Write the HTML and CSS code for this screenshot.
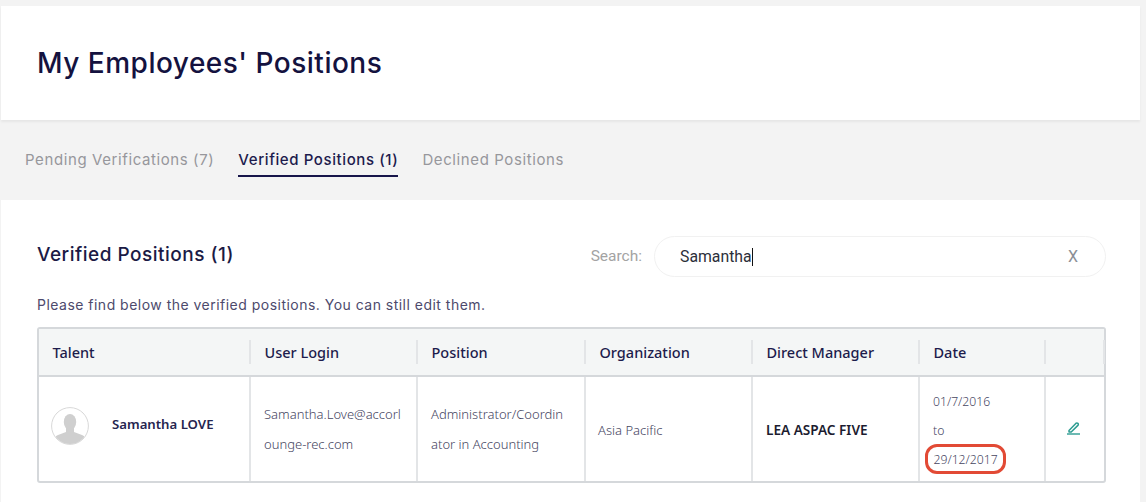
FILE: index.html
```html
<!DOCTYPE html>
<html lang="en">
<head>
<meta charset="utf-8">
<title>My Employees' Positions</title>
<link rel="stylesheet" href="styles.css">
</head>
<body>
<div class="page">
  <header class="title-card"><h1>My Employees' Positions</h1></header>
  <nav class="tabs">
    <a class="tab">Pending Verifications (7)</a>
    <a class="tab tab-active">Verified Positions (1)</a>
    <a class="tab">Declined Positions</a>
  </nav>
  <main class="content">
    <div class="section-head">
      <h2>Verified Positions (1)</h2>
      <div class="search">
        <span class="search-label">Search:</span>
        <div class="search-box"><span class="search-value">Samantha</span><span class="caret"></span><span class="search-clear">X</span></div>
      </div>
    </div>
    <p class="hint">Please find below the verified positions. You can still edit them.</p>
    <div class="table">
      <div class="row head">
        <div class="th"><span>Talent</span></div>
        <div class="th"><span>User Login</span></div>
        <div class="th"><span>Position</span></div>
        <div class="th"><span>Organization</span></div>
        <div class="th"><span>Direct Manager</span></div>
        <div class="th"><span>Date</span></div>
        <div class="th"><span></span></div>
      </div>
      <div class="row body">
        <div class="td talent">
          <svg class="avatar" viewBox="0 0 38 38" aria-hidden="true">
            <defs><clipPath id="av"><circle cx="19" cy="19" r="18"/></clipPath></defs>
            <circle cx="19" cy="19" r="18.4" fill="#fff" stroke="#d8d8d8" stroke-width="1"/>
            <g clip-path="url(#av)" fill="#cfcfcf">
              <ellipse cx="19" cy="15" rx="6.2" ry="8"/>
              <path d="M15 21h8v4l8 3c3 1 4 4 4 10H3c0-6 1-9 4-10l8-3z"/>
            </g>
          </svg>
          <strong class="name">Samantha LOVE</strong>
        </div>
        <div class="td text">Samantha.Love@accorl<br>ounge-rec.com</div>
        <div class="td text">Administrator/Coordin<br>ator in Accounting</div>
        <div class="td text org">Asia Pacific</div>
        <div class="td manager">LEA ASPAC FIVE</div>
        <div class="td text date">
          <span>01/7/2016</span>
          <span>to</span>
          <span class="circled">29/12/2017</span>
        </div>
        <div class="td action">
          <svg class="edit" width="15" height="14" viewBox="0 0 15 14" aria-hidden="true">
            <path d="M3 9.6 9.8 2.4c.6-.6 1.5-.6 2.1 0 .6.6.6 1.4 0 2L5.2 11H3z" fill="none" stroke="#2f9d92" stroke-width="1.5" stroke-linejoin="round"/>
            <path d="M1 13h13" stroke="#2f9d92" stroke-width="1.4"/>
          </svg>
        </div>
      </div>
    </div>
  </main>
</div>
</body>
</html>
```
FILE: styles.css
```css
* { box-sizing: border-box; }
html, body { margin: 0; padding: 0; }
body {
  width: 1146px;
  height: 502px;
  overflow: hidden;
  background: #f3f3f3;
  font-family: "Noto Sans", sans-serif;
}
.page {
  margin-left: 1px;
  margin-right: 6px;
  padding-top: 6px;
}
.title-card {
  height: 114px;
  background: #fff;
  box-shadow: 0 2px 2px #e6e6e6;
  padding: 0 36px;
  display: flex;
  align-items: center;
}
h1 {
  margin: 0;
  font: 500 28px/1 Inter, sans-serif;
  color: #14123f;
  letter-spacing: .5px;
}
.tabs {
  height: 80px;
  display: flex;
  align-items: flex-start;
  gap: 24px;
  padding: 30px 0 0 24px;
}
.tab {
  height: 27px;
  font: 400 15px/19px Inter, sans-serif;
  letter-spacing: .6px;
  color: #97979c;
  white-space: nowrap;
}
.tab-active {
  font-weight: 500;
  color: #1d1b4d;
  border-bottom: 2px solid #17154a;
}
.content {
  background: #fff;
  height: 302px;
  padding: 36px 34px 0 36px;
}
.section-head {
  height: 41px;
  display: flex;
  align-items: center;
  justify-content: space-between;
}
h2 {
  margin: 0 0 4px;
  font: 500 19px/1 Inter, sans-serif;
  letter-spacing: .5px;
  color: #1b1a45;
}
.search {
  display: flex;
  align-items: center;
  gap: 12px;
}
.search-label {
  font: 400 15.5px/1 Roboto, sans-serif;
  color: #a3a3a3;
}
.search-box {
  width: 452px;
  height: 41px;
  border: 1px solid #f1f1f1;
  border-radius: 21px;
  display: flex;
  align-items: center;
  padding: 0 27px 0 25px;
  font: 400 15.8px/1 Roboto, sans-serif;
  color: #2c2f3a;
}
.caret {
  width: 1px;
  height: 18px;
  background: #111;
}
.search-clear {
  margin-left: auto;
  font-size: 16px;
  color: #8b8f96;
}
.hint {
  margin: 19px 0 0;
  font: 400 14px/18px Inter, sans-serif;
  letter-spacing: .48px;
  color: #4d4a6c;
  height: 31px;
}
.table {
  width: 1069px;
  border: 2px solid #d5d8db;
  border-radius: 3px;
}
.row {
  display: grid;
  grid-template-columns: 212px 167px 168px 167px 167px 126px 59px;
}
.head {
  height: 48px;
  background: #f4f6f6;
  border-bottom: 2px solid #d5d8db;
  align-items: center;
}
.th {
  font: 500 14.5px/24px "Noto Sans", sans-serif;
  color: #1d1c4c;
  padding-left: 13.5px;
  border-right: 2px solid #e3e5e7;
  height: 24px;
}
.body { height: 104px; }
.td {
  border-right: 2px solid #e3e5e7;
  display: flex;
  align-items: center;
  padding-left: 13px;
}
.td:last-child { border-right: none; }
.text {
  font: 300 13px/30px "Noto Sans", sans-serif;
  color: #46465f;
  white-space: nowrap;
}
.org { padding-left: 12px; padding-top: 2px; }
.talent { padding-left: 12px; gap: 23px; padding-bottom: 6px; }
.avatar { width: 38px; height: 38px; flex: none; }
.name {
  font: 600 13.2px/1 "Noto Sans", sans-serif;
  color: #26254f;
  padding-bottom: 3px;
}
.manager {
  font: 600 13.6px/1 "Noto Sans", sans-serif;
  color: #1c1c30;
  padding-top: 2px;
}
.date {
  flex-direction: column;
  align-items: flex-start;
  justify-content: flex-start;
  font-size: 12.2px;
  line-height: 29px;
  padding-top: 10px;
}
.circled {
  display: block;
  margin: -1px 0 0 -8px;
  padding: 0 5.5px;
  height: 30px;
  line-height: 25px;
  border: 3px solid #e24a35;
  border-radius: 12px;
}
.action { justify-content: center; padding: 0 4px 2px 0; }
```
